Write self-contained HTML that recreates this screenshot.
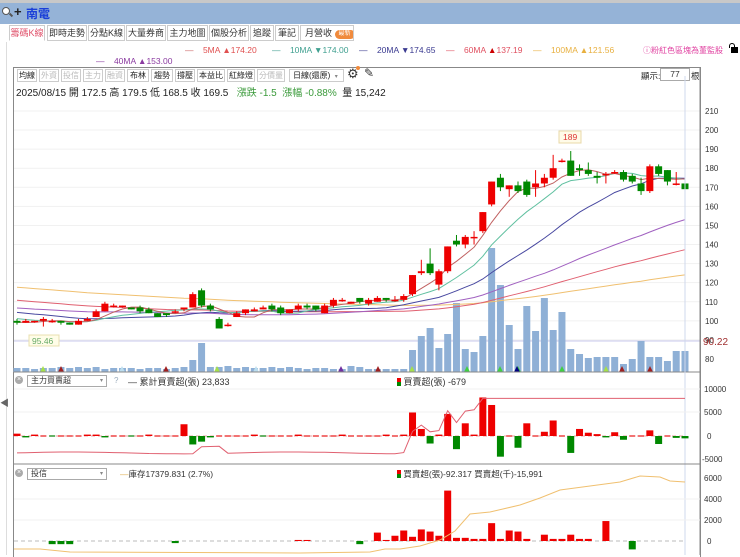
<!DOCTYPE html><html><head><meta charset="utf-8"><style>
*{margin:0;padding:0;box-sizing:border-box}
body{width:740px;height:555px;overflow:hidden;background:#fff;font-family:"Liberation Sans","Noto Sans CJK TC",sans-serif;position:relative;color:#333}
.a{position:absolute;white-space:nowrap}
.tab{position:absolute;top:25px;height:16px;border:1px solid #ccc;background:#fff;font-size:9px;line-height:14px;text-align:center;color:#333;white-space:nowrap;overflow:hidden}
.tb{position:absolute;top:69px;height:13px;border:1px solid #ccc;font-size:8px;line-height:11px;text-align:center;color:#222;white-space:nowrap;overflow:hidden}
.tb.g{color:#bbb}
.lg{position:absolute;font-size:8.5px;top:45px;white-space:nowrap}
</style></head><body>
<div class="a" style="left:0;top:0;width:740px;height:3px;background:#c8c8c8"></div>
<div class="a" style="left:0;top:3px;width:740px;height:21px;background:#95b3d7"></div>
<div class="a" style="left:2px;top:7px;width:8px;height:8px;border:1.5px solid #555;border-radius:50%;background:#fff"></div>
<div class="a" style="left:9px;top:14px;width:4px;height:2px;background:#555;transform:rotate(45deg)"></div>
<div class="a" style="left:14px;top:4px;font-size:13px;font-weight:bold;color:#222">+</div>
<div class="a" style="left:26px;top:5px;font-size:12px;font-weight:bold;color:#1a3fd8">南電</div>
<div class="a" style="left:6px;top:42px;width:1px;height:513px;background:#ddd"></div>
<div class="a" style="left:0;top:396px;font-size:9px;color:#666">◀</div>

<div class="tab" style="left:9px;width:36px;color:#e0506a;border-bottom-color:#fff">籌碼K線</div>
<div class="tab" style="left:47px;width:40px">即時走勢</div>
<div class="tab" style="left:88px;width:37px">分點K線</div>
<div class="tab" style="left:126px;width:40px">大量券商</div>
<div class="tab" style="left:167px;width:41px">主力地圖</div>
<div class="tab" style="left:209px;width:40px">個股分析</div>
<div class="tab" style="left:250px;width:24px">追蹤</div>
<div class="tab" style="left:275px;width:24px">筆記</div>
<div class="tab" style="left:300px;width:54px;text-align:left;padding-left:4px">月營收 <span style="display:inline-block;background:#f08a3c;color:#fff;border-radius:6px;font-size:6px;padding:0 4px;line-height:9px;vertical-align:1px">最新</span></div>

<div class="lg" style="left:185px;color:#e05050"><span style="color:#c66">—</span>&nbsp;&nbsp;&nbsp; 5MA ▲174.20</div>
<div class="lg" style="left:272px;color:#40a090">—&nbsp;&nbsp;&nbsp; 10MA ▼174.00</div>
<div class="lg" style="left:359px;color:#3a3a90">—&nbsp;&nbsp;&nbsp; 20MA ▼174.65</div>
<div class="lg" style="left:446px;color:#e05060">—&nbsp;&nbsp;&nbsp; 60MA <span style="color:#c00">▲</span>137.19</div>
<div class="lg" style="left:533px;color:#e8b040">—&nbsp;&nbsp;&nbsp; 100MA ▲121.56</div>
<div class="lg" style="left:96px;top:56px;color:#8a3aa0">—&nbsp;&nbsp;&nbsp; 40MA ▲153.00</div>
<div class="lg" style="left:643px;color:#e040a0;font-size:8px">ⓘ粉紅色區塊為董監股</div>
<div class="a" style="left:729px;top:43px;width:6px;height:5px;border:1.5px solid #000;border-bottom:none;border-radius:3px 3px 0 0"></div>
<div class="a" style="left:731px;top:47px;width:7px;height:6px;background:#000"></div>

<div class="a" style="left:13px;top:67px;width:688px;height:490px;border:1px solid #888;border-bottom:none"></div>
<div class="tb" style="left:17px;width:20px">均線</div>
<div class="tb g" style="left:39px;width:20px">外資</div>
<div class="tb g" style="left:61px;width:20px">投信</div>
<div class="tb g" style="left:83px;width:20px">主力</div>
<div class="tb g" style="left:105px;width:20px">融資</div>
<div class="tb" style="left:127px;width:22px">布林</div>
<div class="tb" style="left:151px;width:22px">趨勢</div>
<div class="tb" style="left:175px;width:20px">撐壓</div>
<div class="tb" style="left:197px;width:28px">本益比</div>
<div class="tb" style="left:227px;width:28px">紅綠燈</div>
<div class="tb g" style="left:257px;width:28px">分價量</div>
<div class="tb" style="left:289px;width:55px;text-align:left;padding-left:3px">日線(還原)&nbsp;&nbsp;<span style="font-size:6px;color:#888">▾</span></div>
<div class="a" style="left:347px;top:66px;font-size:13px;color:#333">⚙</div>
<div class="a" style="left:356px;top:66px;width:4px;height:4px;border-radius:50%;background:#f08a3c"></div>
<div class="a" style="left:364px;top:66px;font-size:12px;color:#333">✎</div>
<div class="a" style="left:641px;top:70px;font-size:8.5px;color:#222">顯示:</div>
<div class="a" style="left:660px;top:68px;width:30px;height:13px;border:1px solid #aaa;font-size:8.5px;text-align:center;line-height:11px">77</div>
<div class="a" style="left:691px;top:70px;font-size:8.5px;color:#222">根</div>
<div class="a" style="left:16px;top:84px;font-size:10px;color:#222">2025/08/15 開 172.5 高 179.5 低 168.5 收 169.5 &nbsp;&nbsp;<span style="color:#3a9a3a">漲跌 -1.5 &nbsp;漲幅 -0.88%</span> &nbsp;量 15,242</div>

<svg id="s" class="a" style="left:0;top:0" width="740" height="555"></svg>

<div class="a" style="left:15px;top:376px;width:8px;height:8px;border-radius:50%;background:#aaa;color:#fff;font-size:7px;line-height:8px;text-align:center">×</div>
<div class="a" style="left:27px;top:375px;width:80px;height:12px;border:1px solid #aaa;font-size:8px;line-height:10px;padding-left:3px">主力買賣超<span style="position:absolute;right:3px;font-size:6px;color:#888">▾</span></div>
<div class="a" style="left:114px;top:376px;font-size:8px;color:#9ab">?</div>
<div class="a" style="left:128px;top:375px;font-size:9px;color:#333">— 累計買賣超(張) 23,833</div>
<div class="a" style="left:397px;top:375px;font-size:9px;color:#333"><span style="display:inline-block;width:4px;height:8px;background:linear-gradient(#e00 50%,#080 50%);vertical-align:-1px"></span> 買賣超(張) -679</div>
<div class="a" style="left:15px;top:469px;width:8px;height:8px;border-radius:50%;background:#aaa;color:#fff;font-size:7px;line-height:8px;text-align:center">×</div>
<div class="a" style="left:27px;top:468px;width:80px;height:12px;border:1px solid #aaa;font-size:8px;line-height:10px;padding-left:3px">投信<span style="position:absolute;right:3px;font-size:6px;color:#888">▾</span></div>
<div class="a" style="left:120px;top:468px;font-size:8.5px;color:#333"><span style="color:#e0b050">—</span>庫存17379.831 (2.7%)</div>
<div class="a" style="left:397px;top:468px;font-size:8.5px;color:#333"><span style="display:inline-block;width:4px;height:8px;background:linear-gradient(#e00 50%,#080 50%);vertical-align:-1px"></span> 買賣超(張)-92.317 買賣超(千)-15,991</div>

<script>
var s=document.getElementById('s'),h='';
function R(x,y,w,hh,c){h+='<rect x="'+x+'" y="'+y+'" width="'+w+'" height="'+hh+'" fill="'+c+'"/>';}
function L(x1,y1,x2,y2,c,w,d){h+='<line x1="'+x1+'" y1="'+y1+'" x2="'+x2+'" y2="'+y2+'" stroke="'+c+'" stroke-width="'+(w||1)+'"'+(d?' stroke-dasharray="'+d+'"':'')+'/>';}
function T(x,y,t,c,sz){h+='<text x="'+x+'" y="'+y+'" font-size="'+(sz||8)+'" fill="'+(c||'#333')+'" font-family="Liberation Sans">'+t+'</text>';}
for(var p=90;p<=210;p+=10){var y=359-(p-80)*1.908;L(14,y,700,y,'#f1f1f1');}
L(14,341,700,341,'#c8c8ec');
var C=[[100,99,101,98],[99,100,101,99],[100,100,100,99],[100,101,102,97],[100,100,101,99],[100,99,100,98],[99,98,99,98],[98,100,101,98],[100,101,102,100],[102,105,106,102],[105,109,110,105],[108,108,109,107],[108,108,108,107],[107,106,107,106],[107,105,108,104],[106,104,107,104],[104,102,104,102],[104,103,104,102],[105,105,106,104],[106,107,107,105],[107,114,115,107],[116,108,117,107],[108,106,109,105],[101,96,102,96],[98,98,99,97],[102,104,105,102],[104,106,106,103],[105,106,107,105],[106,107,108,106],[108,106,109,105],[107,104,108,103],[104,106,106,104],[106,108,109,105],[108,107,109,106],[108,106,108,105],[104,108,109,104],[108,111,112,107],[111,111,112,110],[109,110,110,109],[112,110,112,109],[109,111,112,108],
[110,112,113,110],[112,111,112,110],[111,111,113,110],[111,113,114,110],[114,124,124,113],[125,126,132,124],[130,125,138,124],[119,126,127,116],[126,139,139,125],[142,140,145,139],[140,144,145,138],[144,144,147,140],[147,157,157,146],[161,173,173,160],[175,170,177,168],[169,171,171,165],[171,168,173,167],[173,166,174,165],[170,172,179,165],[172,175,177,170],[175,180,187,174],[184,184,185,183],[184,176,189,176],[180,179,182,176],[179,177,183,176],[176,175,178,172],[177,177,178,172],[178,178,179,177],[178,174,179,173],[176,173,177,172],[172,168,175,166],[168,181,182,167],[181,177,182,176],[179,173,179,171],[172,172,178,171],[172,169,180,168]];
var n=C.length,st=(685-17)/(n-1);
function X(i){return 17+i*st;}function Y(p){return 359-(p-80)*1.908;}
var cl=[];for(var i=0;i<100;i++)cl.push(135-i*0.35+Math.sin(i/6)*3);
C.forEach(function(c){cl.push(c[1]);});
function ma(k,col){var d='';for(var i=0;i<n;i++){var j=100+i,sm=0;for(var q=0;q<k;q++)sm+=cl[j-q];d+=(i?'L':'M')+X(i).toFixed(1)+' '+Y(sm/k).toFixed(1);}h+='<path d="'+d+'" fill="none" stroke="'+col+'" stroke-width="1"/>';}
var V=[4,4,3,4,4,5,4,5,4,5,3,4,4,4,3,4,4,3,4,5,12,29,5,5,6,4,5,4,4,5,4,5,4,3,4,4,3,3,6,5,3,3,3,3,3,22,36,44,24,38,69,23,20,36,124,87,47,23,66,41,74,42,60,23,18,14,15,15,15,8,13,31,15,15,11,21,21];
V.forEach(function(v,i){R(X(i)-3.5,372-v,7,v,'#8fb0d6');});
ma(100,'#f0c070');ma(60,'#e06070');ma(40,'#a060c0');ma(20,'#4848a0');ma(10,'#60c0a0');ma(5,'#c06060');
C.forEach(function(c,i){var x=X(i),up=c[1]>=c[0],col=up?'#e00':'#080';L(x,Y(c[2]),x,Y(c[3]),col);var t=Y(Math.max(c[0],c[1])),b=Y(Math.min(c[0],c[1]));R(x-3.5,t,7,Math.max(b-t,1.5),col);});
h+='<rect x="559" y="131" width="22" height="12" fill="#fffbe8" stroke="#e8d8a8"/>';T(563,140,'189','#d33',8.5);
h+='<rect x="29" y="335" width="30" height="11" fill="#fffde8" stroke="#e8e0b0"/>';T(32,344,'95.46','#6a6',8.5);
[[43,'#a6e04a'],[61,'#a02020'],[122,'#bde'],[166,'#a02020'],[217,'#a6e04a'],[256,'#bde'],[341,'#7030a0'],[378,'#a02020'],[412,'#a6e04a'],[467,'#40d040'],[500,'#40d040'],[518,'#40d040'],[517,'#000080'],[562,'#40d040'],[606,'#a6e04a'],[622,'#a02020'],[650,'#a02020']].forEach(function(t){h+='<path d="M'+(t[0]-3)+' 372L'+t[0]+' 366L'+(t[0]+3)+' 372Z" fill="'+t[1]+'"/>';});
for(var p=80;p<=210;p+=10)T(705,Y(p)+3,p,'#333',8);
T(703,345,'90.22','#a03030',10);
L(14,372,700,372,'#888');L(685,76,685,555,'#cfd8ec');L(700,67,700,555,'#888');
L(14,464,700,464,'#888');
L(14,412,700,412,'#f1f1f1');L(14,389,700,389,'#f1f1f1');
L(14,436,685,436,'#e8a0a0',1,'4 3');
var P=[0.5,-0.3,0.3,0,-0.2,0.2,0,0,0.3,0.3,-0.3,0,0,-0.2,0,0.3,0,0,0,2.5,-1.8,-1.2,-0.3,0.2,0,0,0,0.3,-0.2,0,0,0,0.3,0,0,0,0.2,0.3,0,0,0.2,0.2,0.3,0,0.3,5,1.5,-1.6,0.3,4.7,-2.8,2.7,0.3,8.2,6.6,-4.4,0,-2.5,2.7,0,0.9,3.3,0,-3.6,1.5,0.7,0.4,-0.3,0.8,-0.8,0,0,1.2,-1.7,0,-0.4,-0.5];
P.forEach(function(v,i){var y=436-v*4.7;if(Math.abs(v)<0.25){L(X(i)-3,436,X(i)+3,436,v>=0?'#e44':'#393',1.5);}else R(X(i)-3.5,Math.min(y,436),7,Math.abs(v*4.7),v>0?'#e00':'#080');});
var d='',cv=-3;P.forEach(function(v,i){cv+=v*0.9;if(i<44)cv=-3.6+Math.sin(i/4)*0.2+(i>20&&i<24?1.5:0);d+=(i?'L':'M')+X(i).toFixed(1)+' '+(436-Math.min(cv,8)*4.7).toFixed(1);});
h+='<path d="'+d+'" fill="none" stroke="#e06070" stroke-width="1"/>';
T(704,392,'10000','#333',8);T(704,415,'5000','#333',8);T(707,439,'0','#333',8);T(702,462,'-5000','#333',8);
L(14,520,700,520,'#f1f1f1');L(14,499,700,499,'#f1f1f1');L(14,541,685,541,'#bbb',1,'4 3');
var Q=[0,0,0,0,-0.3,-0.3,-0.3,0,0,0,0,0,0,0,0,0,0,0,-0.2,0,0,0,0,0,0,0,0,0,0,0,0,0,0.1,0.1,0,0,0,0,0,-0.3,0,0.8,0.1,0.5,1,0.4,1.1,0.9,0.5,4.8,0.3,0.3,0.2,0.2,1.7,0.2,1,0.9,0.2,0,0.6,0.2,0.2,0.6,0.2,0.2,0,1.9,0,0,-0.8,0,0,0,0,0,0];
Q.slice(-77).forEach(function(v,i){var hh=v*10.5;if(v==0)return;R(X(i)-3.5,v>0?541-hh:541,7,Math.abs(hh),v>0?'#e00':'#080');});
h+='<path d="M14 549 L40 549 L70 552 L300 553 L370 552 L385 549 L400 549 L420 546 L440 540 L455 531 L470 514 L490 512 L520 505 L540 498 L560 490 L590 486 L620 482 L640 476 L660 477 L670 481 L685 482" fill="none" stroke="#f0c070" stroke-width="1"/>';
T(704,481,'6000','#333',8);T(704,502,'4000','#333',8);T(704,523,'2000','#333',8);T(707,544,'0','#333',8);
s.innerHTML=h;
</script>
</body></html>
